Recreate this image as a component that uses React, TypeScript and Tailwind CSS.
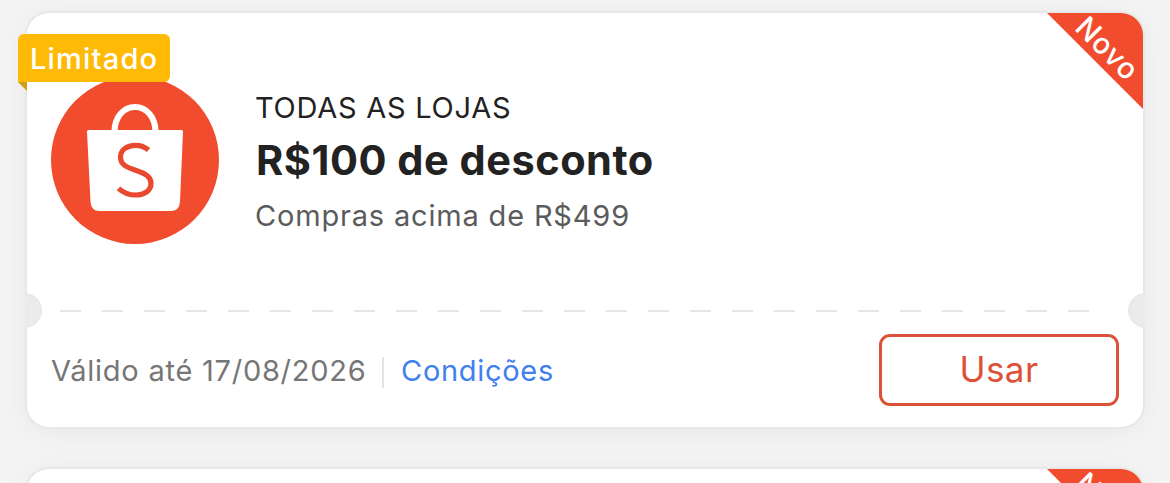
import type { ReactNode } from "react";

const NewRibbon = () => (
  <div className="pointer-events-none absolute right-0 top-0 h-24 w-24">
    <div className="h-24 w-24 rounded-tr-[22px] bg-[#f04c2d] [clip-path:polygon(0_0,100%_0,100%_100%)]" />
    <span className="absolute left-[22px] top-[19px] flex h-8 w-[78px] rotate-45 items-center justify-center text-[29px] font-medium leading-none tracking-[0.8px] text-white">
      Novo
    </span>
  </div>
);

const LimitedTag = () => (
  <div className="absolute -left-[9px] top-[21px]">
    <div className="flex h-12 w-[152px] items-center rounded-[6px] rounded-bl-none bg-[#ffba05] pl-[12px] text-[29px] font-medium leading-none tracking-[1.2px] text-white">
      Limitado
    </div>
    <div className="h-[9px] w-[9px] bg-[#d09d14] [clip-path:polygon(0_0,100%_0,100%_100%)]" />
  </div>
);

const ShopeeLogo = () => (
  <svg viewBox="0 0 168 168" className="-mt-1 h-[168px] w-[168px] shrink-0" fill="none">
    <circle cx="84" cy="84" r="84" fill="#f04c2d" />
    <path d="M63.5 56 C63.5 41 72.5 31 84 31 C95.5 31 104.5 41 104.5 56" stroke="#fff" strokeWidth="6.2" />
    <path
      d="M37.5 54 H130.5 Q132 54 132 55.5 L129 125.5 Q128.5 135 119.5 135 H48.5 Q40 135 39.5 125.5 L36 55.5 Q36 54 37.5 54 Z"
      fill="#fff"
    />
    <path
      d="M97.5 74 C94 71 89.5 69.3 84.5 69.3 C76 69.3 69.5 74 69.5 81 C69.5 88.5 75 91 84.5 94.2 C94.5 97.5 100 100.5 100 107.5 C100 114.5 93.5 119 85 119 C78 119 72 116.5 67.5 112.3"
      stroke="#e9492e"
      strokeWidth="5.2"
    />
  </svg>
);

const CardShell = ({ children }: { children?: ReactNode }) => (
  <div className="relative h-[414px] shrink-0 rounded-[22px] bg-white shadow-[0_0_0_2px_#e8e8e8,0_4px_32px_rgba(0,0,0,0.06)]">
    {children}
    <NewRibbon />
  </div>
);

const Perforation = () => (
  <div className="-mx-[2px] -mt-[17px] flex items-center overflow-hidden">
    <div className="-ml-[18px] h-[35px] w-[35px] shrink-0 rounded-full border-2 border-[#e8e8e8] bg-[#ebebeb]" />
    <div className="ml-[18px] mr-[39px] h-[2px] flex-1 bg-[repeating-linear-gradient(90deg,#e6e6e6_0_21px,transparent_21px_42px)]" />
    <div className="-mr-[18px] h-[35px] w-[35px] shrink-0 rounded-full border-2 border-[#e8e8e8] bg-[#ebebeb]" />
  </div>
);

const VoucherCard = () => (
  <CardShell>
    <div className="flex h-[297px] items-center gap-9 pl-6">
      <ShopeeLogo />
      <div className="flex flex-col">
        <p className="text-[29px] leading-[36px] tracking-[0.75px] text-[#222]">TODAS AS LOJAS</p>
        <p className="mt-2 pl-px text-[41.5px] font-bold leading-[52px] tracking-[0.52px] text-[#222]">
          R$100 de desconto
        </p>
        <p className="mt-3 text-[29px] leading-[36px] tracking-[0.82px] text-[#5b5b5b]">
          Compras acima de R$499
        </p>
      </div>
    </div>

    <Perforation />

    <div className="mt-[6px] flex items-center justify-between pl-6 pr-6">
      <div className="flex items-center text-[29px] leading-[36px]">
        <span className="mt-[2px] w-[331px] tracking-[0.75px] text-[#767676]">Válido até 17/08/2026</span>
        <span className="mt-[5px] h-[31px] w-[2px] bg-[#e3e3e3]" />
        <a href="#" className="ml-[17px] mt-[2px] tracking-[0.7px] text-[#4080ee]">Condições</a>
      </div>
      <button className="h-[72px] w-60 rounded-[11px] border-[3px] border-[#dc5138] pb-[2px] text-[35px] leading-none tracking-[0.4px] text-[#dd5138]">
        Usar
      </button>
    </div>

    <LimitedTag />
  </CardShell>
);

export default function App() {
  return (
    <main className="flex h-[483px] flex-col gap-[42px] overflow-hidden bg-[#f4f4f4] px-[27px] pt-[13px] font-['Inter',sans-serif]">
      <VoucherCard />
      {/* next voucher, peeking in from below */}
      <CardShell />
    </main>
  );
}
